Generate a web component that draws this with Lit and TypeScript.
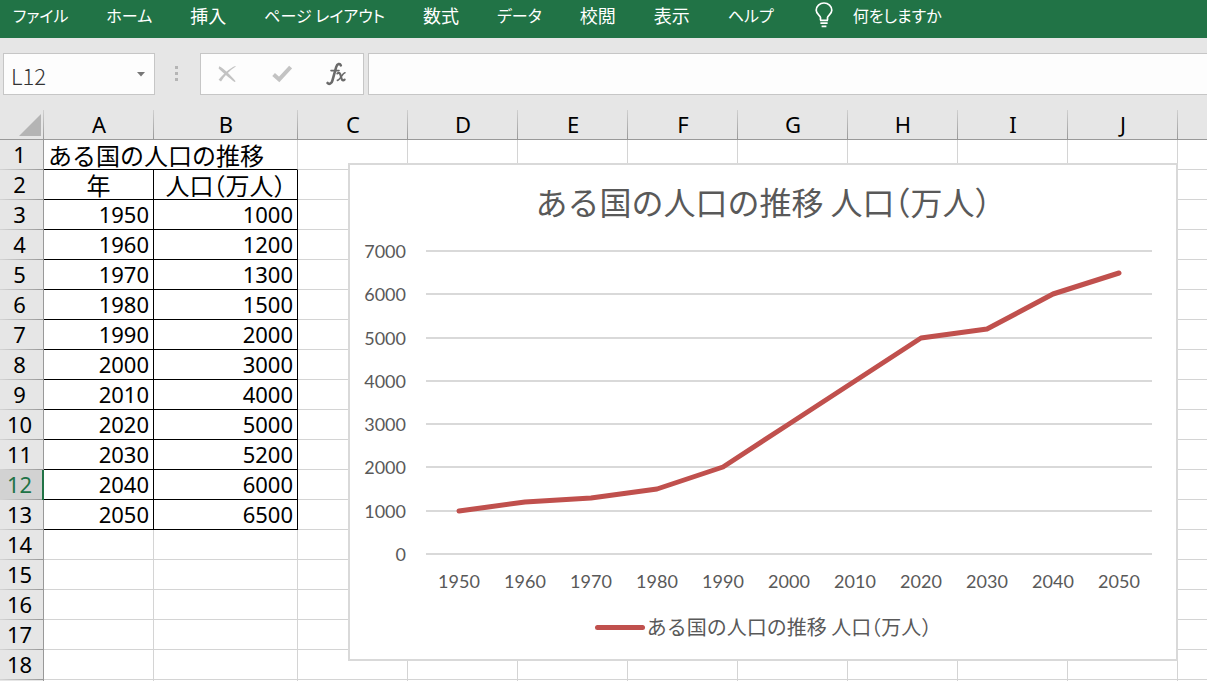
import { LitElement, html, svg, css } from "lit";
import { customElement, state } from "lit/decorators.js";
import { classMap } from "lit/directives/class-map.js";

const TABS = ["ファイル", "ホーム", "挿入", "ページ レイアウト", "数式", "データ", "校閲", "表示", "ヘルプ"];
const COLUMNS = ["A", "B", "C", "D", "E", "F", "G", "H", "I", "J"];
const ROW_COUNT = 18;
const TITLE = "ある国の人口の推移";
const VALUE_LABEL = "人口（万人）";
const DATA: Array<[number, number]> = [
  [1950, 1000],
  [1960, 1200],
  [1970, 1300],
  [1980, 1500],
  [1990, 2000],
  [2000, 3000],
  [2010, 4000],
  [2020, 5000],
  [2030, 5200],
  [2040, 6000],
  [2050, 6500],
];

const hasKana = (text: string) => /[\u3040-\u30ff]/.test(text);

@customElement("population-chart")
export class PopulationChart extends LitElement {
  static styles = css`
    :host {
      display: flex;
      flex-direction: column;
      box-sizing: border-box;
      background: #fff;
      border: 2px solid #d9d9d9;
      color: #595959;
      font-family: "Noto Sans CJK JP", sans-serif;
      font-feature-settings: "halt";
    }
    .title {
      margin: 0;
      padding: 12px 0 2px;
      font-size: 32px;
      line-height: 48px;
      font-weight: 400;
      text-align: center;
    }
    .plot {
      display: block;
      width: 100%;
      height: auto;
    }
    .grid {
      stroke: #d9d9d9;
      stroke-width: 2;
    }
    .series {
      fill: none;
      stroke: #c0504d;
      stroke-width: 5;
      stroke-linecap: round;
      stroke-linejoin: round;
    }
    .tick {
      font-family: Lato, sans-serif;
      font-size: 18px;
      fill: #595959;
    }
    .legend {
      display: flex;
      justify-content: center;
      align-items: center;
      gap: 2px;
      font-size: 20px;
      line-height: 30px;
    }
    .swatch {
      width: 50px;
      height: 5px;
      border-radius: 3px;
      background: #c0504d;
    }
  `;

  render() {
    const left = 76;
    const right = 802;
    const base = 327;
    const top = 24;
    const y = (v: number) => Math.round(base - ((base - top) * v) / 7000);
    const slot = (right - left) / DATA.length;
    const x = (i: number) => Math.round(left + slot * (i + 0.5));
    const ticks = [7000, 6000, 5000, 4000, 3000, 2000, 1000, 0];
    return html`
      <h2 class="title">${TITLE} ${VALUE_LABEL}</h2>
      <svg class="plot" viewBox="0 0 826 385" role="img" aria-label=${TITLE}>
        ${ticks.map(
          (t) => svg`
            <line class="grid" x1=${left} x2=${right} y1=${y(t)} y2=${y(t)}></line>
            <text class="tick" x="56" y=${y(t) + 7} text-anchor="end">${t}</text>`
        )}
        ${DATA.map(([year], i) => svg`<text class="tick" x=${x(i)} y="361" text-anchor="middle">${year}</text>`)}
        <polyline class="series" points=${DATA.map(([, v], i) => `${x(i)},${y(v)}`).join(" ")}></polyline>
      </svg>
      <div class="legend"><span class="swatch"></span><span>${TITLE} ${VALUE_LABEL}</span></div>
    `;
  }
}

@customElement("app-root")
export class AppRoot extends LitElement {
  @state() private activeRow = 12;

  static styles = css`
    :host {
      display: flex;
      flex-direction: column;
      height: 100vh;
      overflow: hidden;
      background: #e6e6e6;
      font-family: "Noto Sans CJK JP", sans-serif;
    }
    button,
    input {
      font: inherit;
      color: inherit;
      border: 0;
      margin: 0;
      padding: 0;
      background: none;
      border-radius: 0;
      outline: 0;
    }
    .ribbon {
      display: flex;
      flex: none;
      align-items: flex-start;
      gap: 38px;
      height: 38px;
      padding-left: 13px;
      background: #217346;
      color: #fff;
      font-size: 18px;
      line-height: 30px;
      white-space: nowrap;
      font-feature-settings: "palt";
    }
    .kana {
      font-size: 16px;
    }
    .tell {
      display: flex;
      gap: 20px;
      padding-left: 3px;
    }
    .bulb {
      width: 18px;
      height: 26px;
      margin-top: 2px;
    }
    .formula-bar {
      display: flex;
      flex: none;
      padding: 15px 0 15px 3px;
    }
    .box {
      display: flex;
      align-items: center;
      box-sizing: border-box;
      height: 42px;
      border: 1px solid #c6c6c6;
      background: #fdfdfd;
    }
    .name-box {
      width: 152px;
    }
    .name-input {
      flex: 1;
      min-width: 0;
      padding: 2px 0 0 7px;
      font-size: 22px;
      line-height: 32px;
      font-weight: 300;
      color: #333;
    }
    .drop {
      display: flex;
      padding: 0 9px;
    }
    .dots {
      display: flex;
      flex-direction: column;
      gap: 3px;
      width: 3px;
      padding: 13px 22px 0 20px;
    }
    .dot {
      height: 3px;
      background: #b5b5b5;
    }
    .actions {
      width: 164px;
      justify-content: space-between;
      padding: 0 16px;
      margin-right: 4px;
    }
    .action {
      display: flex;
    }
    .formula {
      flex: 1;
      border-right: 0;
    }
    .formula-input {
      flex: 1;
      padding: 0 8px;
      font-size: 22px;
    }
    .sheet {
      position: relative;
      flex: 1;
      min-height: 0;
      overflow: hidden;
    }
    .cells {
      width: 100%;
      table-layout: fixed;
      border-collapse: separate;
      border-spacing: 0;
      background: #fff;
      color: #000;
      font-family: "Noto Sans", "Noto Sans CJK JP", sans-serif;
      font-size: 22px;
      line-height: 29px;
    }
    .w-head {
      width: 44px;
    }
    .w-cell {
      width: 110px;
    }
    .w-wide {
      width: 144px;
    }
    th,
    td {
      box-sizing: border-box;
      height: 30px;
      padding: 0;
      font-weight: 400;
      white-space: nowrap;
    }
    td {
      border-right: 1px solid #d4d4d4;
      border-bottom: 1px solid #d4d4d4;
    }
    td:last-child {
      border-right: 0;
    }
    .col-head {
      border-bottom: 1px solid #999;
      background: linear-gradient(#d0d0d0, #999) right / 1px 100% no-repeat #e6e6e6;
    }
    .col-head:last-child {
      background: #e6e6e6;
    }
    .row-head {
      border-right: 1px solid #999;
      background: linear-gradient(90deg, #d4d4d4, #999) bottom / 100% 1px no-repeat #e6e6e6;
      padding: 0 4px 1px 0;
    }
    .row-head.active {
      border-right: 2px solid #217346;
      padding-right: 3px;
      background-color: #d2d2d2;
      color: #217346;
    }
    .corner {
      vertical-align: bottom;
      text-align: right;
    }
    .corner-mark {
      display: block;
      margin: 0 3px 3px auto;
    }
    .sheet-title,
    .head {
      font-family: "Noto Sans CJK JP", sans-serif;
      font-size: 24px;
    }
    .sheet-title {
      padding-left: 4px;
      border-bottom-color: #000;
    }
    .ruled {
      border-color: #000;
    }
    .head {
      text-align: center;
      font-feature-settings: "halt";
    }
    .num {
      text-align: right;
      padding-right: 4px;
    }
    .chart {
      position: absolute;
      left: 348px;
      top: 53px;
      width: 830px;
      height: 498px;
    }
  `;

  private cellsFor(row: number) {
    if (row === 1) return html`<td class="sheet-title" colspan="2">${TITLE}</td>`;
    if (row === 2) return html`<td class="ruled head">年</td><td class="ruled head">${VALUE_LABEL}</td>`;
    const entry = DATA[row - 3];
    if (entry) return html`<td class="ruled num">${entry[0]}</td><td class="ruled num">${entry[1]}</td>`;
    return html`<td></td><td></td>`;
  }

  render() {
    const rows = Array.from({ length: ROW_COUNT }, (_, i) => i + 1);
    return html`
      <nav class="ribbon">
        ${TABS.map((t) => html`<button class=${classMap({ tab: true, kana: hasKana(t) })}>${t}</button>`)}
        <button class="tell kana">
          <svg class="bulb" viewBox="0 0 18 26" fill="none" stroke="#fff" stroke-width="1.7">
            <path d="M5.5 18.2V15.6C5.5 13.4 1.2 12.2 1.2 8.2A7.8 7.2 0 0 1 16.8 8.2C16.8 12.2 12.5 13.4 12.5 15.6V18.2" />
            <path d="M5 18.3H13M5.4 21.2H12.6M6.6 24.4H11.4" />
          </svg>
          <span>何をしますか</span>
        </button>
      </nav>
      <div class="formula-bar">
        <div class="box name-box">
          <input class="name-input" aria-label="名前ボックス" value="L12" />
          <button class="drop" aria-label="名前の一覧">
            <svg width="8" height="5" viewBox="0 0 8 5"><path d="M0 0H8L4 4.5Z" fill="#777" /></svg>
          </button>
        </div>
        <div class="dots"><span class="dot"></span><span class="dot"></span><span class="dot"></span></div>
        <div class="box actions">
          <button class="action" aria-label="キャンセル">
            <svg width="20" height="18" viewBox="0 0 20 18" fill="#c3c3c3">
              <path d="M2.2 1.2C5.5 2.5 14 10.5 18.6 16.2L17.6 17C12 12.6 4.6 6.4 1.6 3.4Z" />
              <path d="M18.8 1.4C13 5.2 7.5 10.5 4 16.6L1.6 14.8C6 9.4 12.4 3.6 18.2 1Z" />
            </svg>
          </button>
          <button class="action" aria-label="入力">
            <svg width="20" height="18" viewBox="0 0 20 18" fill="none" stroke="#c3c3c3" stroke-width="4">
              <path d="M1.6 9.4L7.2 14.4L18.6 2" />
            </svg>
          </button>
          <button class="action" aria-label="関数の挿入">
            <svg width="21" height="24" viewBox="0 0 21 24" fill="none" stroke="#6a6a6a" stroke-linecap="round">
              <path d="M14.8 3.4C14 1.2 11.2 1.4 10.2 5L6.4 18.6C5.6 21.8 3 22.8 1.6 21" stroke-width="2.6" />
              <path d="M5 8.6H13" stroke-width="1.6" />
              <path d="M11.4 11.4C14 10 14.4 12.4 15 14.6C15.6 17.6 16.4 19.6 18.6 17.6" stroke-width="2.2" />
              <path d="M19 10.8C16.6 10.8 14.6 17.8 11.4 18.4" stroke-width="1.6" />
            </svg>
          </button>
        </div>
        <div class="box formula"><input class="formula-input" aria-label="数式バー" /></div>
      </div>
      <main class="sheet">
        <table class="cells">
          <colgroup>
            <col class="w-head" />
            ${COLUMNS.map((c) => html`<col class=${c === "B" ? "w-wide" : "w-cell"} />`)}
            <col />
          </colgroup>
          <thead>
            <tr>
              <th class="col-head corner">
                <svg class="corner-mark" width="22" height="22" viewBox="0 0 22 22"><path d="M22 0V22H0Z" fill="#b4b4b4" /></svg>
              </th>
              ${COLUMNS.map((c) => html`<th class="col-head" scope="col">${c}</th>`)}
              <th class="col-head"></th>
            </tr>
          </thead>
          <tbody>
            ${rows.map(
              (r) => html`<tr>
                <th
                  scope="row"
                  class=${classMap({ "row-head": true, active: r === this.activeRow })}
                  @click=${() => (this.activeRow = r)}
                >${r}</th>
                ${this.cellsFor(r)}
                ${COLUMNS.slice(2).map(() => html`<td></td>`)}
                <td></td>
              </tr>`
            )}
            <tr>
              <th class="row-head"></th>
              ${COLUMNS.map(() => html`<td></td>`)}
              <td></td>
            </tr>
          </tbody>
        </table>
        <population-chart class="chart"></population-chart>
      </main>
    `;
  }
}
